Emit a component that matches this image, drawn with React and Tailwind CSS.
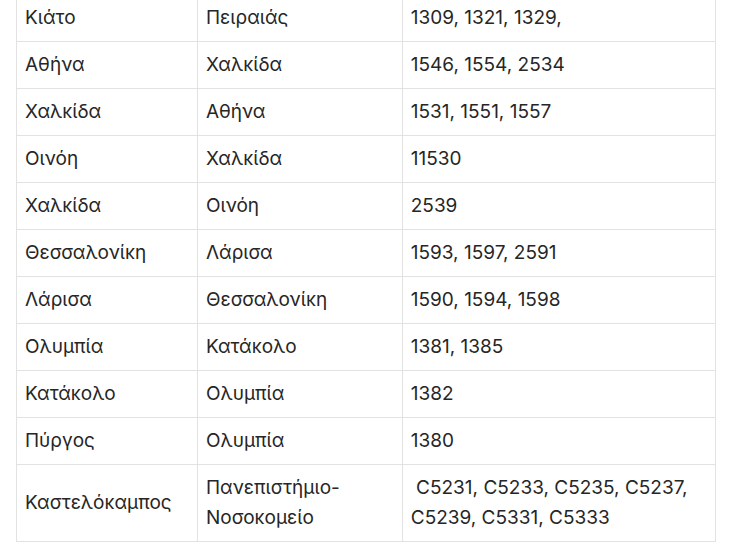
const rows = [
  ['Κιάτο', 'Πειραιάς', '1309, 1321, 1329,'],
  ['Αθήνα', 'Χαλκίδα', '1546, 1554, 2534'],
  ['Χαλκίδα', 'Αθήνα', '1531, 1551, 1557'],
  ['Οινόη', 'Χαλκίδα', '11530'],
  ['Χαλκίδα', 'Οινόη', '2539'],
  ['Θεσσαλονίκη', 'Λάρισα', '1593, 1597, 2591'],
  ['Λάρισα', 'Θεσσαλονίκη', '1590, 1594, 1598'],
  ['Ολυμπία', 'Κατάκολο', '1381, 1385'],
  ['Κατάκολο', 'Ολυμπία', '1382'],
  ['Πύργος', 'Ολυμπία', '1380'],
]

export default function App() {
  return (
    <div className="w-[733px] h-[548px] overflow-hidden bg-white">
      <div className="mt-[-6px] ml-[16px]">
        <table
          className="w-[700px] border-collapse text-[19px] leading-[30px] text-[#262626]"
          style={{ fontFamily: 'Inter, "Noto Sans", sans-serif' }}
        >
          <colgroup>
            <col className="w-[181px]" />
            <col className="w-[205px]" />
            <col className="w-[314px]" />
          </colgroup>
          <tbody>
            {rows.map((r, i) => (
              <tr key={i}>
                {r.map((c, j) => (
                  <td key={j} className="border border-[#e2e2e2] px-2 py-2 align-middle">
                    {c}
                  </td>
                ))}
              </tr>
            ))}
            <tr>
              <td className="border border-[#e2e2e2] px-2 py-2 align-middle">Καστελόκαμπος</td>
              <td className="border border-[#e2e2e2] px-2 py-2 align-middle">
                Πανεπιστήμιο-
                <br />
                Νοσοκομείο
              </td>
              <td className="border border-[#e2e2e2] px-2 py-2 align-middle">
                {'\u00a0C5231, C5233, C5235, C5237,'}
                <br />
                C5239, C5331, C5333
              </td>
            </tr>
          </tbody>
        </table>
      </div>
    </div>
  )
}
